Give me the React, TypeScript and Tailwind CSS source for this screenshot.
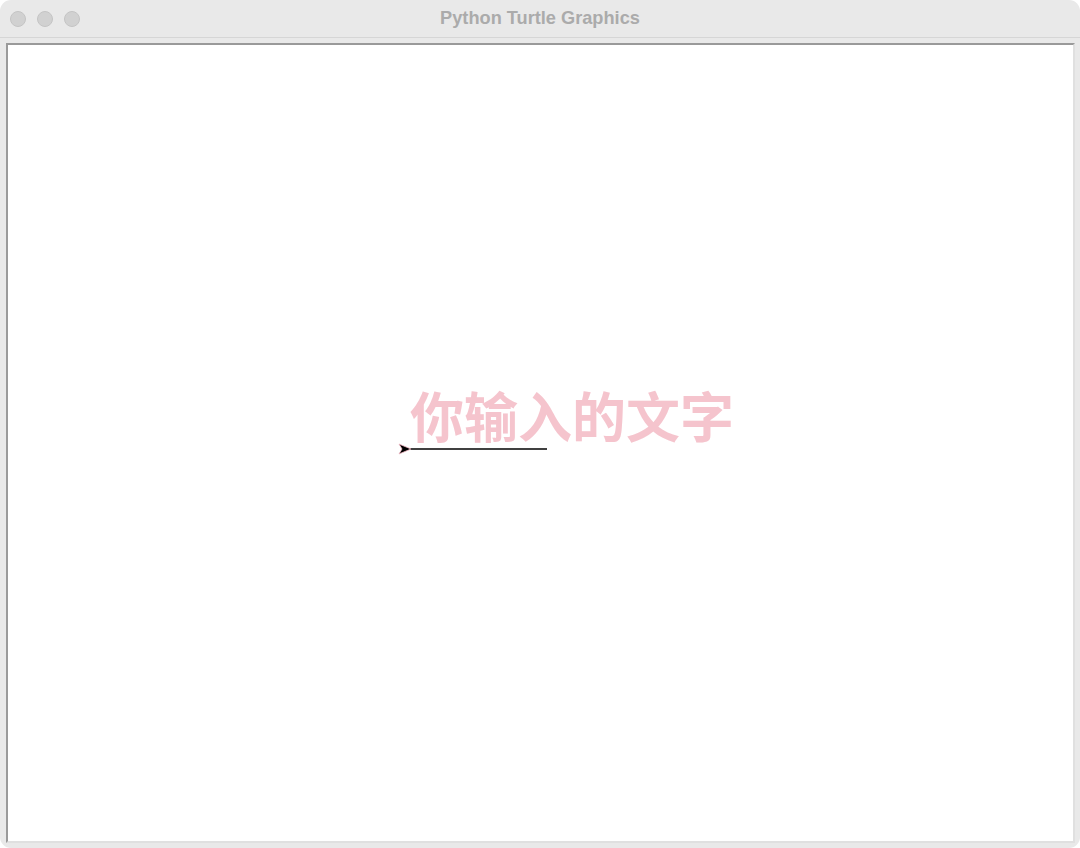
import React from "react";

export default function App() {
  return (
    <div className="w-[1080px] h-[848px] bg-white">
      <div className="w-[1080px] h-[848px] bg-[#e9e9e9] rounded-[11px] overflow-hidden flex flex-col">
        <div className="relative h-[38px] flex items-center border-b border-[#d6d6d6] shrink-0">
          <div className="flex items-center gap-[11px] pl-[10px] pt-[1px]">
            <span className="w-[16px] h-[16px] rounded-full bg-[#d1d1d1] border border-[#c4c4c4]" />
            <span className="w-[16px] h-[16px] rounded-full bg-[#d1d1d1] border border-[#c4c4c4]" />
            <span className="w-[16px] h-[16px] rounded-full bg-[#d1d1d1] border border-[#c4c4c4]" />
          </div>
          <div
            className="absolute inset-0 flex items-center justify-center text-[18.2px] font-bold text-[#ababab]"
            style={{ fontFamily: '"Liberation Sans", Arial, sans-serif' }}
          >
            Python Turtle Graphics
          </div>
        </div>
        <div className="flex-1 pl-[6px] pr-[5px] pt-[5px] pb-[5px] flex">
          <div className="relative flex-1 bg-white border-2 border-t-[#9a9a9a] border-l-[#9a9a9a] border-r-[#e0e0e0] border-b-[#e0e0e0] overflow-hidden">
            <div
              className="absolute left-[402px] top-[343px] text-[54px] leading-none font-bold text-[#f5c4cd] whitespace-nowrap"
              style={{ fontFamily: '"Noto Sans CJK SC", "Noto Sans", sans-serif' }}
            >
              你输入的文字
            </div>
            <div className="absolute left-[402px] top-[403px] w-[137px] h-[1.5px] bg-[#404040]" />
            <svg
              className="absolute left-[390px] top-[398px]"
              width="14"
              height="12"
              viewBox="0 0 14 12"
            >
              <polygon
                points="1,1 13,6 1,11 4,6"
                fill="#000"
                stroke="#f2b8c4"
                strokeWidth="0.8"
                strokeLinejoin="round"
              />
            </svg>
          </div>
        </div>
      </div>
    </div>
  );
}
